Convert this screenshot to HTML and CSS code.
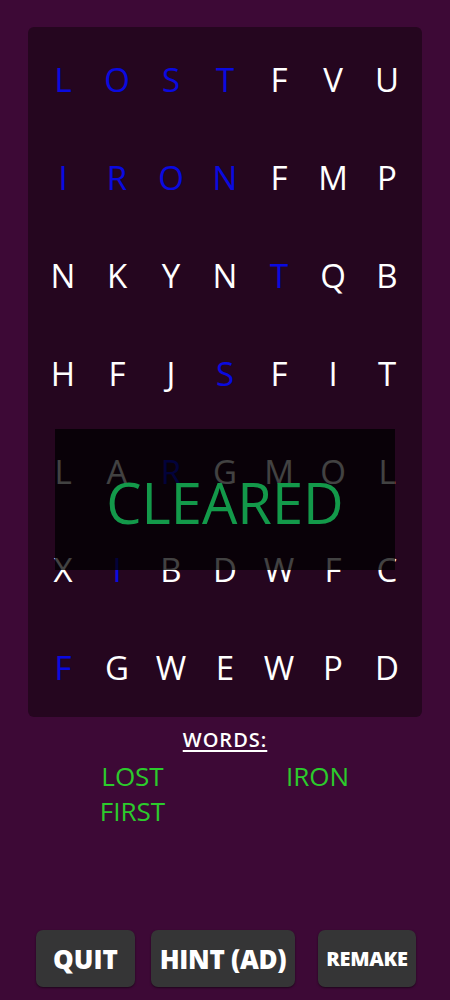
FILE: index.html
```html
<!DOCTYPE html>
<html>
<head>
<meta charset="utf-8">
<link rel="stylesheet" href="styles.css">
</head>
<body>
<div class="page">
  <div class="board">
    <div class="grid">
      <span class="c hit">L</span><span class="c hit">O</span><span class="c hit">S</span><span class="c hit">T</span><span class="c">F</span><span class="c">V</span><span class="c">U</span>
      <span class="c hit">I</span><span class="c hit">R</span><span class="c hit">O</span><span class="c hit">N</span><span class="c">F</span><span class="c">M</span><span class="c">P</span>
      <span class="c">N</span><span class="c">K</span><span class="c">Y</span><span class="c">N</span><span class="c hit">T</span><span class="c">Q</span><span class="c">B</span>
      <span class="c">H</span><span class="c">F</span><span class="c">J</span><span class="c hit">S</span><span class="c">F</span><span class="c">I</span><span class="c">T</span>
      <span class="c">L</span><span class="c">A</span><span class="c hit">R</span><span class="c">G</span><span class="c">M</span><span class="c">O</span><span class="c">L</span>
      <span class="c">X</span><span class="c hit">I</span><span class="c">B</span><span class="c">D</span><span class="c">W</span><span class="c">F</span><span class="c">C</span>
      <span class="c hit">F</span><span class="c">G</span><span class="c">W</span><span class="c">E</span><span class="c">W</span><span class="c">P</span><span class="c">D</span>
    </div>
    <div class="overlay">CLEARED</div>
  </div>
  <div class="words-title">WORDS:</div>
  <div class="words">
    <span class="w">LOST</span><span class="w">IRON</span>
    <span class="w">FIRST</span>
  </div>
  <div class="spacer"></div>
  <div class="buttons">
    <div class="btn quit">QUIT</div>
    <div class="btn hint">HINT (AD)</div>
    <div class="btn remake">REMAKE</div>
  </div>
</div>
</body>
</html>
```
FILE: styles.css
```css
html, body {
  margin: 0;
  padding: 0;
  background: #3d0936;
}
body {
  width: 450px;
  height: 1000px;
  overflow: hidden;
  font-family: "Open Sans", "Liberation Sans", sans-serif;
}
.page {
  display: flex;
  flex-direction: column;
  height: 1000px;
  padding-top: 27px;
  box-sizing: border-box;
}
.board {
  position: relative;
  margin-left: 28px;
  width: 394px;
  height: 690px;
  box-sizing: border-box;
  padding: 3px 8px 1px;
  background: #25061f;
  border-radius: 6px;
}
.grid {
  display: grid;
  grid-template-columns: repeat(7, 54px);
  grid-template-rows: repeat(7, 98px);
}
.c {
  display: flex;
  align-items: center;
  justify-content: center;
  font-size: 33px;
  color: #ffffff;
  line-height: 1;
}
.c.hit {
  color: #0a0ae0;
}
.overlay {
  position: absolute;
  left: 27px;
  top: 402px;
  width: 340px;
  height: 141px;
  background: rgba(0, 0, 0, 0.74);
  color: #13994a;
  font-size: 56px;
  display: flex;
  align-items: center;
  justify-content: center;
  padding-top: 4px;
  box-sizing: border-box;
}
.words-title {
  margin-top: 9px;
  text-align: center;
  color: #ffffff;
  font-size: 20px;
  font-weight: 600;
  letter-spacing: 1px;
  text-decoration: underline;
  text-underline-offset: 3px;
  text-decoration-thickness: 1.5px;
  line-height: 28px;
}
.words {
  margin-top: 5px;
  align-self: center;
  display: grid;
  grid-template-columns: 185px 185px;
  grid-auto-rows: 35px;
}
.w {
  text-align: center;
  color: #2ccb2c;
  font-size: 26px;
  line-height: 35px;
}
.spacer {
  flex: 1;
}
.buttons {
  display: flex;
  padding-left: 36px;
  margin-bottom: 13px;
  align-items: center;
}
.btn {
  height: 57px;
  background: #353536;
  border-radius: 7px;
  color: #ffffff;
  font-weight: 800;
  display: flex;
  align-items: center;
  justify-content: center;
  box-shadow: 0 1px 2px rgba(0, 0, 0, 0.5);
  white-space: nowrap;
}
.quit {
  width: 99px;
  font-size: 26px;
}
.hint {
  width: 144px;
  margin-left: 16px;
  font-size: 26px;
  letter-spacing: -0.3px;
}
.remake {
  width: 98px;
  margin-left: 23px;
  font-size: 20px;
  letter-spacing: -0.3px;
}
```
